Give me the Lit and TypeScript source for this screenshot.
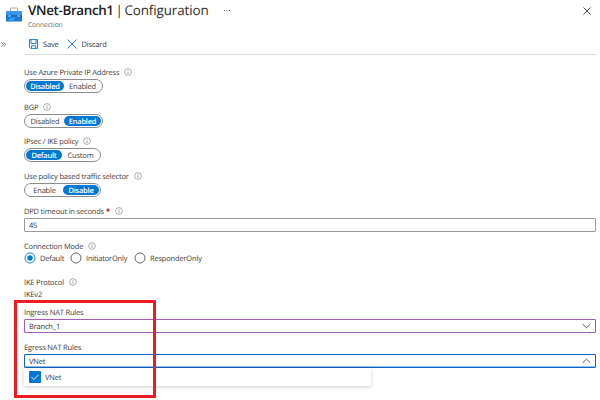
import { LitElement, html, css, svg } from "lit";
import { customElement, property } from "lit/decorators.js";

const info = html`<svg class="info" width="8" height="8" viewBox="0 0 8 8">
  <circle cx="4" cy="4" r="3.4" fill="none" stroke="#777" stroke-width=".6" />
  <path d="M4 3.5V6M4 2v.8" stroke="#666" stroke-width=".6" />
</svg>`;

const chevron = (up: boolean) => html`<svg width="9" height="6" viewBox="0 0 9 6">
  ${svg`<path d=${up ? "M.7 4.8L4.5 1.2L8.3 4.8" : "M.7 1.2L4.5 4.8L8.3 1.2"} fill="none" stroke="#444" stroke-width=".9"/>`}
</svg>`;

@customElement("option-switch")
class OptionSwitch extends LitElement {
  @property({ type: Array }) options: string[] = [];
  @property({ type: Number }) selected = 0;
  @property({ type: Array }) widths: number[] = [];
  static styles = css`
    :host { display: flex; }
    .track { display: flex; box-sizing: border-box; height: 14px; padding: 1px; border: 1px solid #8c8c8c; border-radius: 7px; }
    .seg { height: 10px; line-height: 12px; border-radius: 5px; text-align: center; white-space: nowrap; }
    .on { background: #0078d4; color: #fff; font-weight: 600; letter-spacing: -0.25px; }
  `;
  render() {
    return html`<div class="track">
      ${this.options.map((o, i) => html`<div class="seg ${i === this.selected ? "on" : ""}" style="width:${this.widths[i]}px">${o}</div>`)}
    </div>`;
  }
}

@customElement("app-root")
class AppRoot extends LitElement {
  static styles = css`
    :host {
      display: block; position: relative; width: 600px; height: 400px; overflow: hidden;
      background: #fff; color: #3c3c3c; font: 7.5px/12px "Open Sans", "Noto Sans", sans-serif;
      text-rendering: geometricPrecision; letter-spacing: -0.18px;
    }
    svg { display: block; flex: none; }
    header { display: flex; height: 34px; box-sizing: border-box; padding-left: 6px; }
    .box { margin-top: 7px; }
    .titles { margin-left: 6px; width: 195px; white-space: nowrap; }
    h1 { margin: 0; padding-top: 1px; font-size: 13.4px; line-height: 19px; font-weight: 400; color: #303030; letter-spacing: -0.1px; word-spacing: -1.6px; }
    h1 b { font-weight: 600; color: #202020; letter-spacing: -0.35px; }
    .sub { font-size: 6.7px; line-height: 9px; color: #666; letter-spacing: -0.1px; }
    .dots { margin: 10px 0 0 0; }
    .close { margin: 7px 9px 0 auto; }
    .bar { display: flex; height: 20px; align-items: center; margin-right: 4px; }
    .expand { margin: 0 23px 0 1px; }
    .cmd { display: flex; align-items: center; gap: 5px; margin-right: 8px; color: #303030; }
    .rule { margin: 0 4px 0 24px; height: 1px; background: #dcdcdc; }
    main { margin: 11px 4px 0 24px; }
    .field { height: 35px; }
    .short { height: 34px; }
    .mode { height: 36px; }
    .proto { height: 30px; }
    .label { display: flex; align-items: center; height: 12px; gap: 5px; margin-bottom: 1px; white-space: nowrap; }
    .req { color: #b00020; margin-left: -3px; font-weight: 700; }
    .input { box-sizing: border-box; height: 14px; border: 1px solid #999; border-radius: 1px; padding: 0 4px; display: flex; align-items: center; justify-content: space-between; color: #303030; }
    .purple { border-color: #a35fb8; }
    .focus { border-color: #0f62c8; box-shadow: inset 0 -.5px #2b88d8; }
    .radios { display: flex; height: 12px; margin-top: -1px; align-items: center; }
    .radio { display: flex; align-items: center; gap: 4px; white-space: nowrap; }
    .r1 { width: 46px; }
    .r2 { width: 64px; }
    .menu { width: 347px; height: 18px; box-sizing: border-box; padding-left: 5px; display: flex; align-items: center; gap: 4px; box-shadow: 0 1px 4px #0003; }
    .mark { position: absolute; left: 14px; top: 300px; width: 142px; height: 98px; box-sizing: border-box; border: 3px solid #ed1c24; }
    .label span, .cmd span, .input span, .radio span, .menu span { padding-top: 2px; line-height: 12px; }
  `;

  label(text: string, required = false) {
    return html`<div class="label"><span>${text}</span>${required ? html`<span class="req">*</span>` : ""}${info}</div>`;
  }

  radio(text: string, cls: string, on = false) {
    return html`<div class="radio ${cls}">
      <svg width="12" height="12" viewBox="0 0 12 12">
        <circle cx="6" cy="6" r="5" fill="#fff" stroke=${on ? "#0078d4" : "#555"} stroke-width=".9" />
        <circle cx="6" cy="6" r=${on ? 2.7 : 0} fill="#0078d4" />
      </svg><span>${text}</span>
    </div>`;
  }

  render() {
    return html`
      <header>
        <svg class="box" width="16" height="16" viewBox="0 0 16 16">
          <path d="M4.5 4V1.7Q4.5 1 5.2 1h5.6q.7 0 .7.7V4" fill="none" stroke="#a8a8a8" stroke-width="1" />
          <rect y="4" width="16" height="5" rx=".6" fill="#3a96e8" />
          <rect y="8.5" width="16" height="6" rx=".6" fill="#1c78d4" />
          <path d="M0 8.3h16v1H0z" fill="#1160b4" />
          <path d="M1 14.5L5 10.5h5l-3.5 4z" fill="#3b9bea" />
          <path d="M2.5 8.2h2v1.6h-2zM11.5 8.2h2v1.6h-2z" fill="#a8d6fb" />
        </svg>
        <div class="titles">
          <h1><b>VNet-Branch1</b> | Configuration</h1>
          <div class="sub">Connection</div>
        </div>
        <svg class="dots" width="8" height="2" viewBox="0 0 8 2"><path d="M1 .5h1M3.5 .5h1M6 .5h1" stroke="#555" /></svg>
        <svg class="close" width="8" height="8" viewBox="0 0 8 8"><path d="M.5 .5l7 7M7.5 .5l-7 7" stroke="#333" stroke-width=".9" /></svg>
      </header>
      <div class="bar">
        <svg class="expand" width="5" height="5" viewBox="0 0 5 5"><path d="M.3 .3L2.5 2.5L.3 4.7M2.6 .3L4.8 2.5L2.6 4.7" fill="none" stroke="#555" stroke-width=".7" /></svg>
        <div class="cmd">
          <svg width="9" height="10" viewBox="0 0 9 10"><path d="M.5 .6h8v8.8H1.7L.5 8.2zM2 .6v4h5v-4M2.4 9.4V6.8h4.3v2.6" fill="none" stroke="#1b7fd4" stroke-width="1" /></svg>
          <span>Save</span>
        </div>
        <div class="cmd">
          <svg width="10" height="10" viewBox="0 0 10 10"><path d="M.5 .5l9 9M9.5 .5l-9 9" stroke="#1b7fd4" stroke-width="1" /></svg>
          <span>Discard</span>
        </div>
      </div>
      <div class="rule"></div>
      <main>
        <div class="field">${this.label("Use Azure Private IP Address")}
          <option-switch .options=${["Disabled", "Enabled"]} .widths=${[38, 37]}></option-switch></div>
        <div class="field short">${this.label("BGP")}
          <option-switch .options=${["Disabled", "Enabled"]} .widths=${[38, 37]} .selected=${1}></option-switch></div>
        <div class="field">${this.label("IPsec / IKE policy")}
          <option-switch .options=${["Default", "Custom"]} .widths=${[36, 37]}></option-switch></div>
        <div class="field">${this.label("Use policy based traffic selector")}
          <option-switch .options=${["Enable", "Disable"]} .widths=${[37, 36]} .selected=${1}></option-switch></div>
        <div class="field">${this.label("DPD timeout in seconds", true)}
          <div class="input"><span>45</span></div></div>
        <div class="field mode">${this.label("Connection Mode")}
          <div class="radios">${this.radio("Default", "r1", true)}${this.radio("InitiatorOnly", "r2")}${this.radio("ResponderOnly", "")}</div></div>
        <div class="field proto">${this.label("IKE Protocol")}<div>IKEv2</div></div>
        <div class="field"><div class="label"><span>Ingress NAT Rules</span></div>
          <div class="input purple"><span>Branch_1</span>${chevron(false)}</div></div>
        <div class="field"><div class="label"><span>Egress NAT Rules</span></div>
          <div class="input focus"><span>VNet</span>${chevron(true)}</div>
          <div class="menu">
            <svg width="12" height="12" viewBox="0 0 12 12"><rect width="12" height="12" rx="1" fill="#0078d4" /><path d="M2.5 6.2L4.8 8.5L9.5 3.8" fill="none" stroke="#fff" stroke-width=".9" /></svg>
            <span>VNet</span>
          </div></div>
      </main>
      <div class="mark"></div>`;
  }
}
